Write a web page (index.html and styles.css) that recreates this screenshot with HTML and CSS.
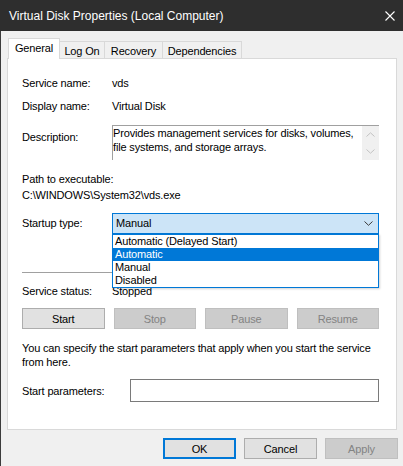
FILE: index.html
```html
<!DOCTYPE html>
<html>
<head>
<meta charset="utf-8">
<link rel="stylesheet" href="styles.css">
</head>
<body>
<div class="window">
  <div class="titlebar">
    <span class="title">Virtual Disk Properties (Local Computer)</span>
    <svg class="close" width="10" height="10" viewBox="0 0 10 10"><path d="M0.5 0.5 L9.5 9.5 M9.5 0.5 L0.5 9.5" stroke="#fff" stroke-width="1.1" fill="none"/></svg>
  </div>
  <div class="dialog">
    <div class="tabs">
      <div class="tab active t1">General</div>
      <div class="tab t2">Log On</div>
      <div class="tab t3">Recovery</div>
      <div class="tab t4">Dependencies</div>
    </div>
    <div class="panel">
      <div class="row r1"><span class="label">Service name:</span><span>vds</span></div>
      <div class="row r2"><span class="label">Display name:</span><span>Virtual Disk</span></div>
      <div class="row r3">
        <span class="label desc-label">Description:</span>
        <div class="descbox">
          <div class="desctext">Provides management services for disks, volumes, file systems, and storage arrays.</div>
          <div class="scrollbar">
            <svg width="9" height="5" viewBox="0 0 9 5"><path d="M0.5 4.5 L4.5 0.8 L8.5 4.5" stroke="#c2c2c2" fill="none"/></svg>
            <svg width="9" height="5" viewBox="0 0 9 5"><path d="M0.5 0.5 L4.5 4.2 L8.5 0.5" stroke="#c2c2c2" fill="none"/></svg>
          </div>
        </div>
      </div>
      <div class="path">
        <div>Path to executable:</div>
        <div>C:\WINDOWS\System32\vds.exe</div>
      </div>
      <div class="row r4">
        <span class="label">Startup type:</span>
        <div class="combo">
          <div class="select">
            <span>Manual</span>
            <svg width="9" height="5" viewBox="0 0 9 5"><path d="M0.5 0.5 L4.5 4.3 L8.5 0.5" stroke="#3a3a3a" fill="none"/></svg>
          </div>
          <div class="list">
            <div class="item">Automatic (Delayed Start)</div>
            <div class="item sel">Automatic</div>
            <div class="item">Manual</div>
            <div class="item">Disabled</div>
          </div>
        </div>
      </div>
      <div class="sep"></div>
      <div class="row r5"><span class="label">Service status:</span><span>Stopped</span></div>
      <div class="btnrow">
        <div class="btn">Start</div>
        <div class="btn disabled">Stop</div>
        <div class="btn disabled">Pause</div>
        <div class="btn disabled">Resume</div>
      </div>
      <div class="para">You can specify the start parameters that apply when you start the service from here.</div>
      <div class="params">
        <span class="label">Start parameters:</span>
        <div class="input"></div>
      </div>
    </div>
    <div class="footer">
      <div class="btn fbtn default">OK</div>
      <div class="btn fbtn">Cancel</div>
      <div class="btn fbtn disabled">Apply</div>
    </div>
  </div>
</div>
</body>
</html>
```

FILE: styles.css
```css
* { box-sizing: border-box; }
body {
  margin: 0;
  font-family: "Liberation Sans", Arial, sans-serif;
  font-size: 11px;
  letter-spacing: -0.15px;
  color: #000;
  background: #f0f0f0;
}
.window {
  width: 403px;
  height: 466px;
  overflow: hidden;
}
.titlebar {
  height: 31px;
  background: #2e2e2e;
  color: #fff;
  display: flex;
  align-items: center;
  justify-content: space-between;
  padding: 0 8px 0 9px;
  font-size: 12px;
  letter-spacing: 0;
}
.close { display: block; }
.dialog {
  height: 435px;
  background: #f0f0f0;
  border-left: 1px solid #3c3c3c;
  padding-top: 7px;
}
.tabs {
  display: flex;
  align-items: flex-end;
  height: 21px;
  margin-left: 7px;
  margin-bottom: -1px;
  position: relative;
  z-index: 1;
}
.tab {
  height: 17px;
  margin-bottom: 1px;
  border: 1px solid #d9d9d9;
  border-bottom: none;
  margin-left: -1px;
  display: flex;
  align-items: center;
  justify-content: center;
  background: #f0f0f0;
  padding-top: 1px;
}
.tab.t1 { margin-left: 0; }
.tab.active {
  height: 21px;
  margin-bottom: 0;
  background: #fff;
  position: relative;
  z-index: 2;
  padding-top: 0;
  padding-bottom: 2px;
}
.t1 { width: 52px; }
.t2 { width: 46px; }
.t3 { width: 59px; }
.t4 { width: 80px; }
.panel {
  margin-left: 6px;
  width: 390px;
  height: 372px;
  background: #fff;
  border: 1px solid #d9d9d9;
  padding: 17px 17px 0 14px;
}
.row {
  display: grid;
  grid-template-columns: 90px 1fr;
  line-height: 15px;
}
.r2 { margin-top: 8px; }
.r3 { margin-top: 11px; align-items: start; }
.desc-label { padding-top: 5px; }
.descbox {
  height: 35px;
  border-top: 1px solid #a0a0a0;
  border-left: 1px solid #a0a0a0;
  display: flex;
  background: #fff;
}
.desctext {
  flex: 1;
  line-height: 14px;
  padding-right: 4px;
}
.scrollbar {
  width: 17px;
  background: #f0f0f0;
  display: flex;
  flex-direction: column;
  align-items: center;
  justify-content: space-between;
  padding: 6px 0 6px;
}
.scrollbar svg { display: block; }
.path {
  margin-top: 11px;
  line-height: 16px;
}
.r4 { margin-top: 10px; align-items: center; }
.combo { position: relative; }
.select {
  height: 21px;
  border: 1px solid #0078d7;
  background: #cce4f7;
  display: flex;
  align-items: center;
  justify-content: space-between;
  padding: 0 5px 0 3px;
  line-height: 15px;
}
.select svg { display: block; }
.list {
  position: absolute;
  left: 0;
  right: 0;
  top: 21px;
  background: #fff;
  border: 1px solid #0078d7;
  z-index: 5;
  box-shadow: 1px 1px 2px rgba(0,0,0,0.18);
}
.item {
  height: 13px;
  line-height: 13px;
  padding-left: 2px;
}
.item.sel {
  background: #0078d7;
  color: #fff;
}
.sep {
  margin-top: 38px;
  border-top: 1px solid #a0a0a0;
}
.r5 { margin-top: 11px; }
.btnrow {
  margin-top: 9px;
  display: grid;
  grid-template-columns: repeat(4, 1fr);
  column-gap: 9px;
}
.btn {
  height: 21px;
  border: 1px solid #adadad;
  background: #e1e1e1;
  display: flex;
  align-items: center;
  justify-content: center;
}
.btn.disabled {
  background: #cccccc;
  border-color: #bfbfbf;
  color: #838383;
}
.para {
  margin-top: 12px;
  line-height: 14px;
}
.params {
  margin-top: 10px;
  display: grid;
  grid-template-columns: 108px 1fr;
  align-items: center;
}
.input {
  height: 23px;
  border: 1px solid #7a7a7a;
  background: #fff;
}
.footer {
  margin-top: 8px;
  display: flex;
  justify-content: flex-end;
  gap: 8px;
  padding-right: 5px;
}
.fbtn { width: 73px; }
.btn.default {
  border: 2px solid #0078d7;
}
```
